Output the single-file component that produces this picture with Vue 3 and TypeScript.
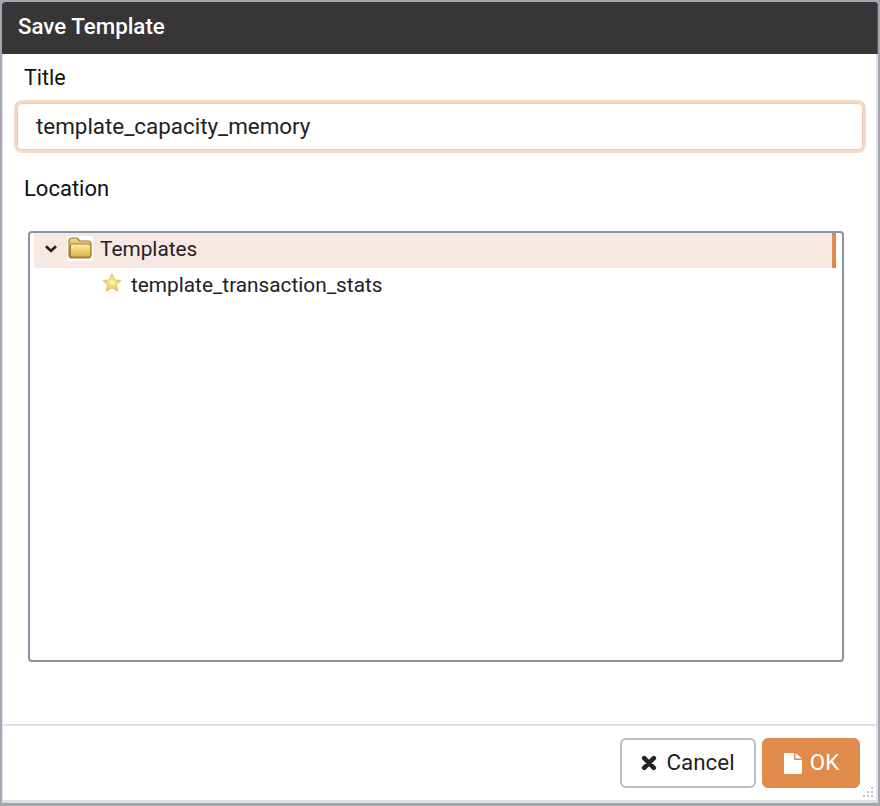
<script setup lang="ts">
const title = 'Save Template'
</script>

<template>
  <div class="page">
    <div class="dialog">
      <header class="head">{{ title }}</header>
      <main class="body">
        <label class="lbl first">Title</label>
        <div class="input">template_capacity_memory</div>
        <label class="lbl second">Location</label>
        <div class="tree">
          <div class="row selected">
            <svg class="chev" width="14" height="10" viewBox="0 0 14 10"><path d="M2 2.200 7 7l5-4.800" fill="none" stroke="#222" stroke-width="2.600"/></svg>
            <svg class="folder" width="26" height="25" viewBox="0 0 26 25">
              <defs>
                <linearGradient id="fg" x1="0" y1="0" x2="0" y2="1"><stop offset="0" stop-color="#fff0a8"/><stop offset="1" stop-color="#e0b040"/></linearGradient>
                <linearGradient id="fb" x1="0" y1="0" x2="0" y2="1"><stop offset="0" stop-color="#f3dc92"/><stop offset="1" stop-color="#a87c2c"/></linearGradient>
              </defs>
              <rect width="26" height="25" fill="#fff"/>
              <path d="M2 5q0-3 3-3h5l3 3h8q3 0 3 3v11q0 3-3 3H5q-3 0-3-3z" fill="url(#fb)" stroke="#a07a32" stroke-width="1.200"/>
              <path d="M3.500 10q0-2 2-2h15q3 0 3 2v9q0 2-2 2H5.500q-2 0-2-2z" fill="url(#fg)" stroke="#a8822f" stroke-width="1"/>
            </svg>
            <span class="name">Templates</span>
            <span class="mark"></span>
          </div>
          <div class="row child">
            <svg class="star" width="20" height="20" viewBox="0 0 20 20">
              <defs><radialGradient id="sg"><stop offset="0" stop-color="#fff8b8"/><stop offset="1" stop-color="#ecc030"/></radialGradient></defs>
              <path d="m10 .8 2.800 6 6.400.7-4.800 4.300 1.400 6.400-5.800-3.300-5.800 3.300 1.400-6.400L.8 7.500l6.400-.7z" fill="url(#sg)" stroke="#d8bc78" stroke-width=".8"/>
            </svg>
            <span class="name">template_transaction_stats</span>
          </div>
        </div>
      </main>
      <footer class="foot">
        <button class="btn cancel">
          <svg width="16" height="16" viewBox="0 0 16 16"><path d="M3.200 3.200 12.800 12.800M12.800 3.200 3.200 12.800" stroke="#222" stroke-width="4.600" stroke-linecap="round"/></svg>
          <span>Cancel</span>
        </button>
        <button class="btn ok">
          <svg width="20" height="23" viewBox="0 0 20 23"><path d="M1 2.200Q1 1 2.200 1H11v7h8v12.800q0 1.200-1.200 1.200H2.200Q1 22 1 20.800zM12.500 1 19 6.500h-6.500z" fill="#fff"/></svg>
          <span>OK</span>
        </button>
        <svg class="grip" width="14" height="14" viewBox="0 0 14 14" fill="#bcc0c8">
          <rect x="9" y="1" width="2" height="2"/><rect x="5" y="5" width="2" height="2"/><rect x="9" y="5" width="2" height="2"/><rect x="1" y="9" width="2" height="2"/><rect x="5" y="9" width="2" height="2"/><rect x="9" y="9" width="2" height="2"/>
        </svg>
      </footer>
    </div>
  </div>
</template>

<style>
html, body { margin: 0; background: #fff; }
</style>

<style scoped>
.page {
  width: 880px;
  height: 806px;
  box-sizing: border-box;
  background: #a2a6b2;
  padding: 2px 2px 3px 2px;
  font-family: Roboto, "Liberation Sans", sans-serif;
  overflow: hidden;
}
.dialog {
  height: 100%;
  display: flex;
  flex-direction: column;
  box-sizing: border-box;
  border-radius: 4px 4px 0 0;
  overflow: hidden;
}
.head {
  height: 52px;
  flex: none;
  background: #373535;
  color: #fff;
  font-size: 22.300px;
  font-weight: 500;
  line-height: 48px;
  padding-left: 16px;
  box-sizing: border-box;
  border-right: 1px solid #55555c;
}
.body {
  flex: 1;
  display: flex;
  flex-direction: column;
  padding: 0 13px;
  min-height: 0;
  background: #fff;
  border-left: 1px solid #dfe0e4;
  border-right: 2px solid #dfe0e4;
}
.lbl { display: block; font-size: 21.500px; color: #111; line-height: 24px; padding-left: 8px; }
.first { margin-top: 12px; }
.second { margin-top: 27px; font-size: 22px; }
.input {
  margin-top: 13px;
  height: 47px;
  margin-left: 1px;
  box-sizing: border-box;
  border: 1px solid #f1c8aa;
  outline: 3px solid #f6d9c5;
  outline-offset: 0;
  border-radius: 5px;
  font-size: 22.400px;
  color: #222;
  line-height: 45px;
  padding-left: 18px;
}
.tree {
  margin: 30px 0 0 12px;
  width: 816px;
  height: 431px;
  box-sizing: border-box;
  border: 2px solid #8a92a2;
  border-radius: 4px;
  padding: 0 6px 0 4px;
  background: #fff;
}
.row {
  display: flex;
  align-items: center;
  position: relative;
}
.selected { background: #f7e8e4; height: 35px; }
.chev { margin-left: 10px; flex: none; margin-bottom: 4px; }
.folder { margin-left: 9px; flex: none; margin-bottom: 4px; }
.name { font-size: 20.800px; color: #222; margin-left: 7px; margin-bottom: 4px; }
.mark { position: absolute; right: 0; top: 0; bottom: 0; width: 4px; background: #e08a4b; }
.child { padding-left: 68px; height: 36px; }
.child .name { margin-left: 9px; margin-bottom: 2px; }
.star { flex: none; margin-bottom: 6px; }
.foot {
  flex: none;
  height: 79px;
  background: #fff;
  border-top: 2px solid #dfe0e4;
  border-left: 1px solid #dfe0e4;
  border-right: 2px solid #dfe0e4;
  border-bottom: 3px solid #dfe0e4;
  box-sizing: border-box;
  display: flex;
  justify-content: flex-end;
  align-items: flex-start;
  gap: 6px;
  padding: 12px 16px 0 0;
  position: relative;
}
.btn {
  height: 50px;
  box-sizing: border-box;
  border-radius: 6px;
  font: 400 22.400px Roboto, "Liberation Sans", sans-serif;
  display: flex;
  align-items: center;
  justify-content: center;
  padding: 0;
}
.btn span { margin-bottom: 2px; }
.cancel { width: 136px; background: #fff; border: 2px solid #b8bfcb; color: #222; gap: 9px; }
.ok { width: 98px; background: #e08a4b; border: 1px solid #e08a4b; color: #fff; gap: 7px; }
.grip { position: absolute; right: 0; bottom: 0; }
</style>
